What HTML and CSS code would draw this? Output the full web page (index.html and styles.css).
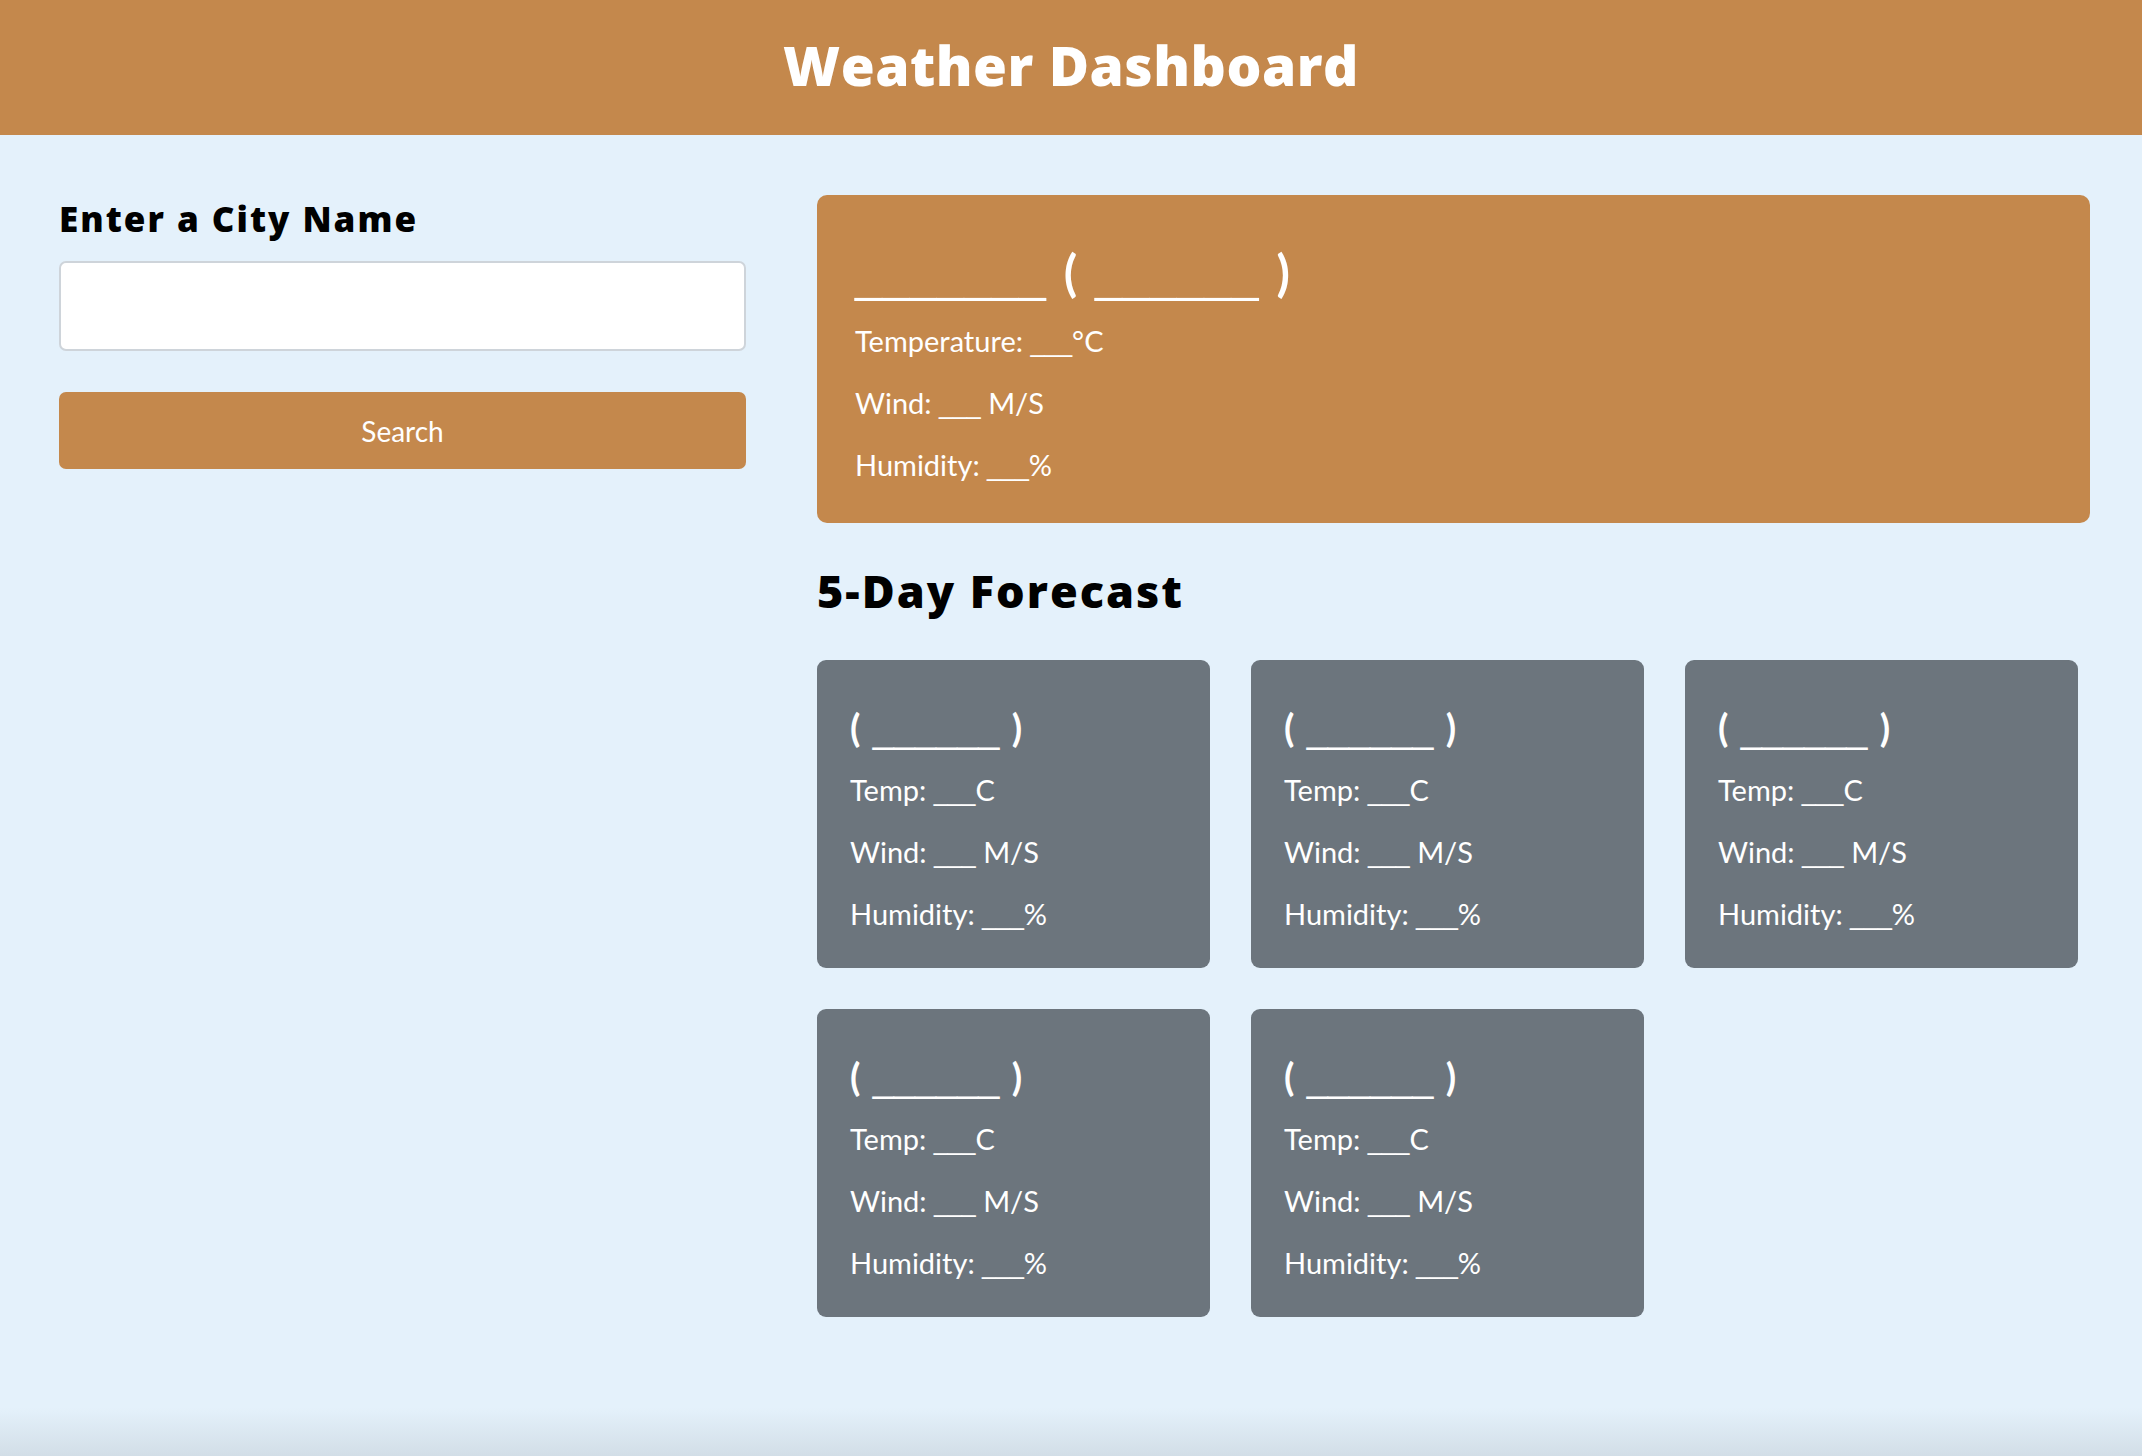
FILE: index.html
```html
<!DOCTYPE html>
<html lang="en">
<head>
<meta charset="utf-8">
<title>Weather Dashboard</title>
<link rel="stylesheet" href="styles.css">
</head>
<body>
<header class="topbar">
  <h1 class="topbar-title">Weather Dashboard</h1>
</header>
<main class="layout">
  <section class="search-col">
    <h3 class="search-label">Enter a City Name</h3>
    <input class="search-input" type="text" aria-label="City name">
    <button class="search-btn" type="button">Search</button>
  </section>
  <section class="results-col">
    <div class="current-card">
      <h2 class="current-title"><span class="blank">_______</span> ( <span class="blank">______</span> )</h2>
      <p class="stat">Temperature: <span class="blank">___</span>°C</p>
      <p class="stat">Wind: <span class="blank">___</span> M/S</p>
      <p class="stat">Humidity: <span class="blank">___</span>%</p>
    </div>
    <h2 class="forecast-heading">5-Day Forecast</h2>
    <div class="forecast-grid">
      <div class="day-card">
        <h3 class="day-title">( <span class="blank">______</span> )</h3>
        <p class="stat">Temp: <span class="blank">___</span>C</p>
        <p class="stat">Wind: <span class="blank">___</span> M/S</p>
        <p class="stat">Humidity: <span class="blank">___</span>%</p>
      </div>
      <div class="day-card">
        <h3 class="day-title">( <span class="blank">______</span> )</h3>
        <p class="stat">Temp: <span class="blank">___</span>C</p>
        <p class="stat">Wind: <span class="blank">___</span> M/S</p>
        <p class="stat">Humidity: <span class="blank">___</span>%</p>
      </div>
      <div class="day-card">
        <h3 class="day-title">( <span class="blank">______</span> )</h3>
        <p class="stat">Temp: <span class="blank">___</span>C</p>
        <p class="stat">Wind: <span class="blank">___</span> M/S</p>
        <p class="stat">Humidity: <span class="blank">___</span>%</p>
      </div>
      <div class="day-card">
        <h3 class="day-title">( <span class="blank">______</span> )</h3>
        <p class="stat">Temp: <span class="blank">___</span>C</p>
        <p class="stat">Wind: <span class="blank">___</span> M/S</p>
        <p class="stat">Humidity: <span class="blank">___</span>%</p>
      </div>
      <div class="day-card">
        <h3 class="day-title">( <span class="blank">______</span> )</h3>
        <p class="stat">Temp: <span class="blank">___</span>C</p>
        <p class="stat">Wind: <span class="blank">___</span> M/S</p>
        <p class="stat">Humidity: <span class="blank">___</span>%</p>
      </div>
    </div>
  </section>
</main>
</body>
</html>
```

FILE: styles.css
```css
* { box-sizing: border-box; }

html, body {
  margin: 0;
  padding: 0;
}

body {
  min-height: 100vh;
  font-family: Lato, "Open Sans", "Liberation Sans", sans-serif;
  color: #000;
  background: linear-gradient(to bottom, #e4f1fb 0, #e4f1fb calc(100% - 48px), #d2dee7 100%);
}

.topbar {
  height: 135px;
  background: #c4884c;
  display: flex;
  align-items: center;
  justify-content: center;
  padding-bottom: 6px;
}

.topbar-title {
  margin: 0;
  color: #fff;
  font-family: "Open Sans", Lato, sans-serif;
  font-size: 55px;
  font-weight: 800;
  line-height: 1.2;
  letter-spacing: 0.5px;
}

.layout {
  display: flex;
  gap: 71px;
  padding: 60px 52px 0 59px;
}

.search-col {
  width: 687px;
  flex: none;
  display: flex;
  flex-direction: column;
}

.search-label {
  margin: 3px 0 21px;
  font-family: "Open Sans", Lato, sans-serif;
  font-size: 35px;
  font-weight: 800;
  line-height: 1.2;
  letter-spacing: 2px;
}

.search-input {
  height: 90px;
  border: 2px solid #ced4da;
  border-radius: 7px;
  background: #fff;
  font-size: 28px;
  padding: 0 16px;
}

.search-btn {
  margin-top: 41px;
  height: 77px;
  border: none;
  border-radius: 7px;
  background: #c4884c;
  color: #fff;
  font-family: inherit;
  font-size: 28px;
  font-weight: 400;
}

.results-col {
  flex: 1;
  min-width: 0;
}

.current-card {
  background: #c4884c;
  color: #fff;
  border-radius: 10px;
  padding: 42px 38px 27px;
}

.current-title {
  margin: 0;
  height: 73px;
  font-size: 49px;
  font-weight: 700;
  line-height: 70px;
  word-spacing: 6px;
}

.blank {
  font-family: "Liberation Sans", Arial, sans-serif;
  font-weight: 400;
  line-height: 0;
}

.stat {
  margin: 0;
  font-size: 29px;
  line-height: 62px;
}

.stat .blank {
  font-size: 25px;
}

.forecast-heading {
  margin: 41px 0 42px;
  font-family: "Open Sans", Lato, sans-serif;
  font-size: 45px;
  font-weight: 800;
  line-height: 1.2;
  letter-spacing: 2px;
}

.forecast-grid {
  display: grid;
  grid-template-columns: repeat(3, 393px);
  gap: 41px;
}

.day-card {
  background: #6c757d;
  color: #fff;
  border-radius: 9px;
  padding: 35px 33px 23px;
}

.day-title {
  margin: 0;
  height: 64px;
  font-size: 38px;
  font-weight: 700;
  line-height: 64px;
  word-spacing: 3px;
}
```
